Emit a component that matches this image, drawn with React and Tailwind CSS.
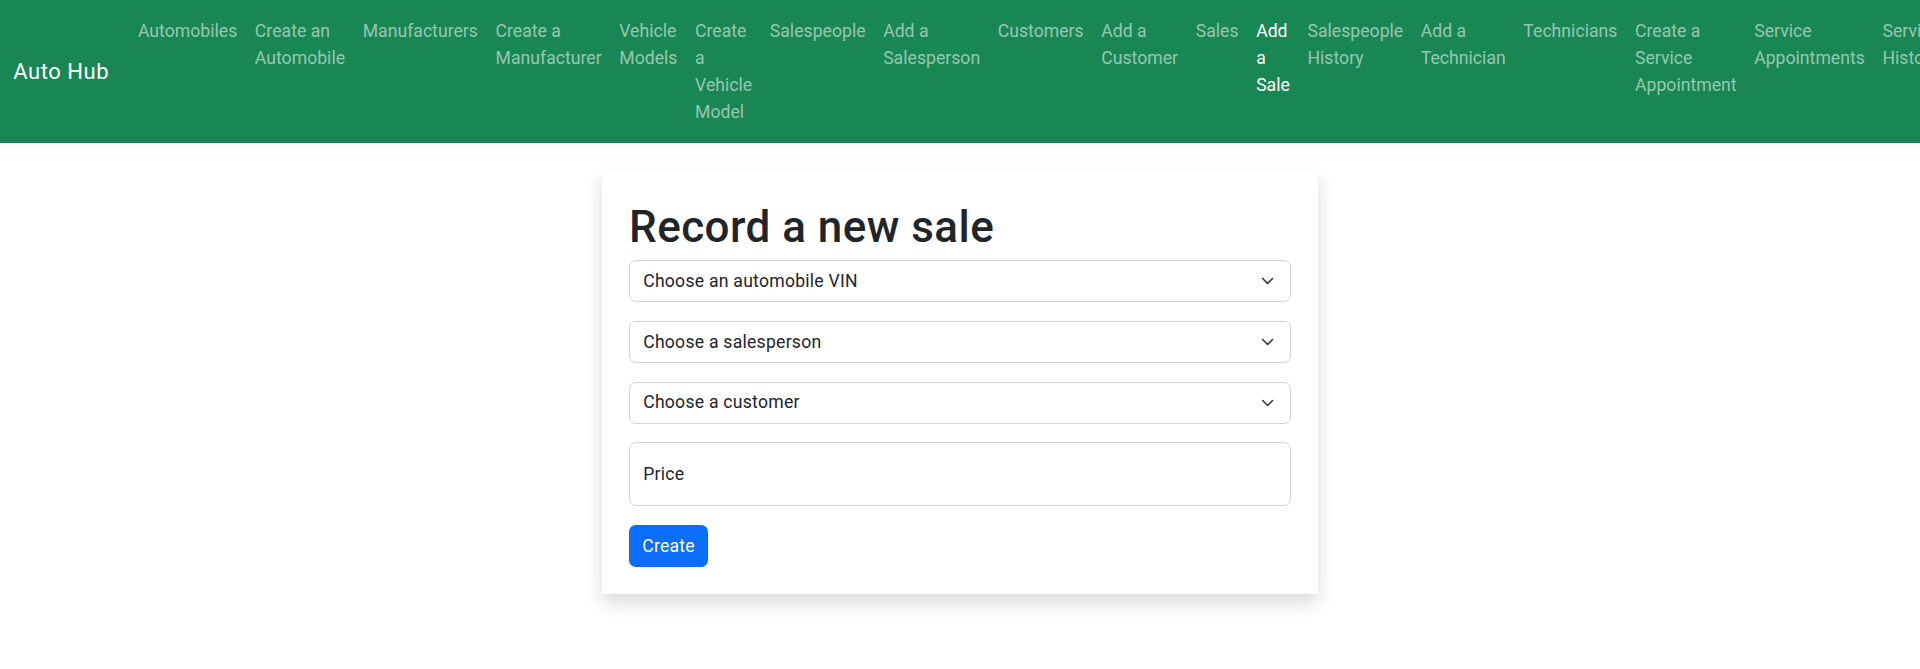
import React from "react";

const links = [
  { label: "Automobiles" },
  { label: "Create an Automobile" },
  { label: "Manufacturers" },
  { label: "Create a Manufacturer" },
  { label: "Vehicle Models" },
  { label: "Create a Vehicle Model" },
  { label: "Salespeople" },
  { label: "Add a Salesperson" },
  { label: "Customers" },
  { label: "Add a Customer" },
  { label: "Sales" },
  { label: "Add a Sale", active: true },
  { label: "Salespeople History" },
  { label: "Add a Technician" },
  { label: "Technicians" },
  { label: "Create a Service Appointment" },
  { label: "Service Appointments" },
  { label: "Service History" },
];

function Chevron() {
  return (
    <svg
      viewBox="0 0 16 16"
      className="pointer-events-none absolute right-[16.4px] top-1/2 h-[13.2px] w-[13.2px] -translate-y-1/2"
      fill="none"
      stroke="#343a40"
      strokeWidth="2"
      strokeLinecap="round"
      strokeLinejoin="round"
    >
      <path d="m2 5 6 6 6-6" />
    </svg>
  );
}

function Select({ label }) {
  return (
    <div className="relative mb-[18.7px]">
      <select
        defaultValue=""
        className="block h-[42px] w-full appearance-none rounded-[6.6px] border border-[#ced4da] bg-white pl-[13.2px] pr-[42px] text-[17.6px] tracking-[0.25px] text-[#212529] outline-none"
      >
        <option value="">{label}</option>
      </select>
      <Chevron />
    </div>
  );
}

export default function App() {
  return (
    <div className="min-h-screen bg-white font-['Roboto',sans-serif] text-[#212529]">
      <nav className="flex items-center overflow-hidden bg-[#198754] px-[13.2px] py-[8.8px]">
        <a className="mr-[20px] shrink-0 whitespace-nowrap py-[5.5px] text-[22px] leading-[33px] tracking-[0.55px] text-white">
          Auto Hub
        </a>
        <ul className="flex">
          {links.map((l) => (
            <li key={l.label}>
              <a
                className={
                  "block px-[8.8px] py-[8.8px] text-[17.6px] leading-[27px] tracking-[0.03px] " +
                  (l.active ? "text-white" : "text-[#ffffff8c]")
                }
              >
                {l.label}
              </a>
            </li>
          ))}
        </ul>
      </nav>

      <div className="mx-auto mt-[27px] w-[716px] bg-white px-[27px] pb-[26.6px] pt-[31.3px] shadow-[0_8.8px_17.6px_rgba(0,0,0,0.15)]">
        <h1 className="mb-[5.9px] text-[44px] font-medium leading-[52.8px] tracking-[0.45px] text-[#212529]">
          Record a new sale
        </h1>
        <form>
          <Select label="Choose an automobile VIN" />
          <Select label="Choose a salesperson" />
          <Select label="Choose a customer" />
          <div className="mb-[18.7px]">
            <input
              type="number"
              placeholder="Price"
              className="block h-[64px] w-full rounded-[6.6px] border border-[#ced4da] bg-white px-[13.2px] text-[17.6px] tracking-[0.25px] text-[#212529] outline-none placeholder:text-[#212529]"
            />
          </div>
          <button
            type="button"
            className="h-[42px] rounded-[6.6px] bg-[#0d6efd] px-[13.2px] text-[17.6px] tracking-[0.25px] text-white"
          >
            Create
          </button>
        </form>
      </div>
    </div>
  );
}
